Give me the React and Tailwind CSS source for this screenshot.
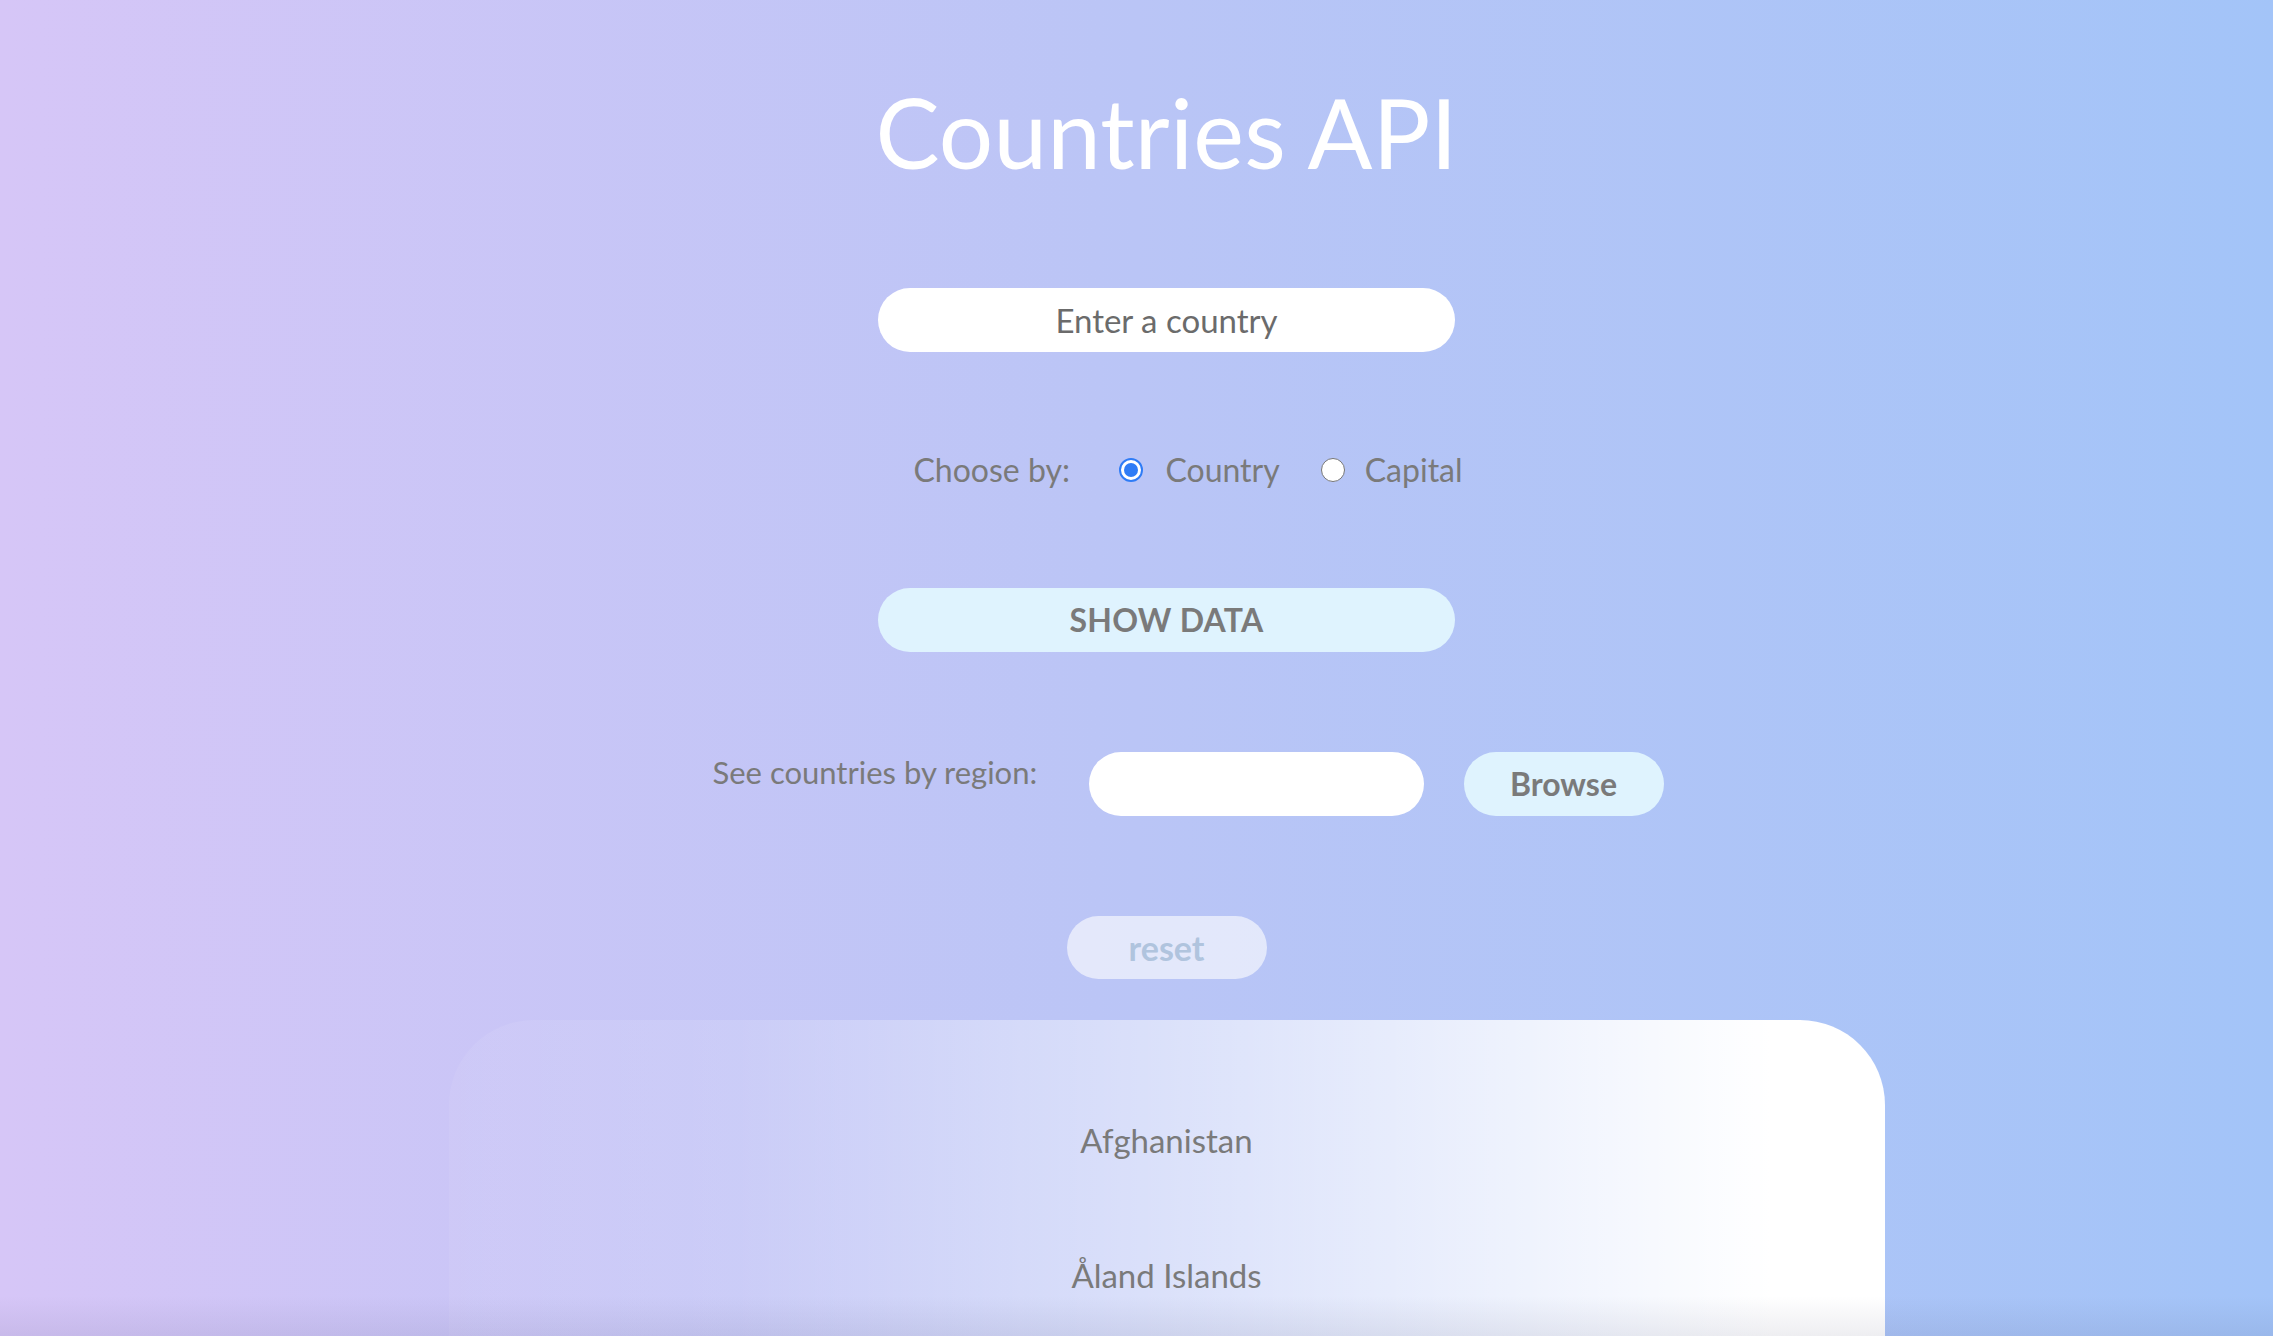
import React from "react";

function Radio({ checked }) {
  return checked ? (
    <span className="w-[24px] h-[24px] rounded-full border-[2px] border-[#2f7cf6] bg-white flex items-center justify-center shrink-0">
      <span className="w-[14px] h-[14px] rounded-full bg-[#2f7cf6]" />
    </span>
  ) : (
    <span className="w-[24px] h-[24px] rounded-full border-[1.5px] border-[#767676] bg-white shrink-0" />
  );
}

export default function App() {
  const countries = ["Afghanistan", "Åland Islands"];
  return (
    <div className="relative h-screen w-full overflow-hidden bg-[linear-gradient(90deg,#d6c6f7_0%,#bac5f6_50%,#a3c4f8_100%)] font-['Lato','Open_Sans',sans-serif] text-[#7a7a7a]">
      <div className="flex flex-col items-center pl-[60px]">
        <h1 className="mt-[84px] text-[96px] leading-none text-white font-normal tracking-[0.2px]">
          Countries API
        </h1>

        <input
          type="text"
          placeholder="Enter a country"
          className="mt-[108px] w-[577px] h-[64px] rounded-full bg-white text-center text-[33px] text-[#6b6b6b] placeholder:text-[#6b6b6b] outline-none"
        />

        <div className="mt-[86px] ml-[43px] h-[64px] flex items-center text-[32px]">
          <span className="w-[156px] whitespace-nowrap">Choose by:</span>
          <label className="ml-[50px] flex items-center">
            <Radio checked />
            <span className="ml-[22px]">Country</span>
          </label>
          <label className="ml-[41px] flex items-center">
            <Radio />
            <span className="ml-[20px]">Capital</span>
          </label>
        </div>

        <button className="mt-[86px] w-[577px] h-[64px] rounded-full bg-[#dff3fe] text-[32px] font-bold text-[#7a7a7a] tracking-[0.3px]">
          SHOW DATA
        </button>

        <div className="mt-[100px] ml-[43px] flex items-start">
          <span className="w-[346px] whitespace-nowrap text-[31px] leading-[38px] pt-[1px]">
            See countries by region:
          </span>
          <input
            type="text"
            className="ml-[30px] w-[335px] h-[64px] rounded-full bg-white outline-none"
          />
          <button className="ml-[40px] w-[200px] h-[64px] rounded-full bg-[#dff3fe] text-[32px] font-bold text-[#7a7a7a]">
            Browse
          </button>
        </div>

        <button className="mt-[100px] w-[200px] h-[63px] rounded-full bg-white/60 text-[34px] font-bold text-[#b0c4de]">
          reset
        </button>

        <div className="mt-[41px] w-[1436px] h-[420px] rounded-t-[85px] bg-[linear-gradient(90deg,rgba(255,255,255,0.06)_0%,rgba(255,255,255,0.12)_20%,#ffffff_92%)] pt-[100px] flex flex-col items-center gap-[95px] text-[33px] leading-[40px] text-[#7a7a7a]">
          {countries.map((c) => (
            <div key={c}>{c}</div>
          ))}
        </div>
      </div>
      <div className="pointer-events-none absolute left-0 right-0 bottom-0 h-[40px] bg-[linear-gradient(180deg,rgba(0,0,0,0)_0%,rgba(40,40,80,0.08)_100%)]" />
    </div>
  );
}
